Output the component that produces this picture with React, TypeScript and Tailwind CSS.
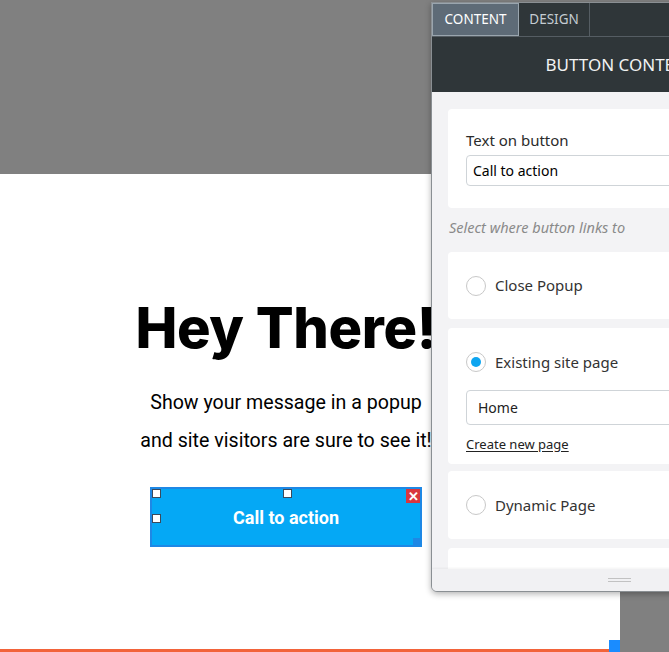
const panelFont = { fontFamily: '"Noto Sans", "Open Sans", sans-serif' };

const Radio = ({ checked }: { checked?: boolean }) => (
  <span className="flex h-[20px] w-[20px] items-center justify-center rounded-full border border-[#c8c8c8] bg-white">
    {checked && <span className="h-[10px] w-[10px] rounded-full bg-[#0ea5f0]" />}
  </span>
);

const Handle = ({ className }: { className: string }) => (
  <span className={`absolute h-[9px] w-[9px] border border-[#3b4a5c] bg-white ${className}`} />
);

export default function App() {
  return (
    <div className="relative h-[652px] w-[669px] overflow-hidden bg-white">
      <div className="h-[174px] bg-[#808080]" />
      <div className="flex h-[478px]">
        <div className="relative w-[620px] bg-white">
          <div className="flex w-[572px] flex-col items-center pt-[124px]">
            <h1
              className="text-[56px] font-extrabold leading-[60px] tracking-[-0.3px] text-black"
              style={{ fontFamily: 'Inter, "Open Sans", sans-serif' }}
            >
              Hey There!
            </h1>
            <div
              className="mt-[26px] text-center text-[19.6px] leading-[38px] text-black"
              style={{ fontFamily: 'Roboto, sans-serif' }}
            >
              <p>Show your message in a popup</p>
              <p>and site visitors are sure to see it!</p>
            </div>
            <div className="relative mt-[27px] flex h-[60px] w-[272px] items-center justify-center border-2 border-[#1e88e5] bg-[#05a8f5]">
              <span className="text-[18px] font-bold text-white" style={{ fontFamily: 'Roboto, sans-serif' }}>
                Call to action
              </span>
              <Handle className="left-0 top-0" />
              <Handle className="left-[131px] top-0" />
              <Handle className="left-0 top-[25px]" />
              <span className="absolute right-0 top-0 flex h-[14px] w-[14px] items-center justify-center bg-[#d9363e] text-[13px] font-bold leading-none text-white">
                ✕
              </span>
              <span className="absolute bottom-0 right-0 h-[7px] w-[7px] bg-[#1e88e5]" />
            </div>
          </div>
          <div className="absolute bottom-0 left-0 h-[3px] w-[610px] bg-[#f2633a]" />
          <div className="absolute bottom-0 right-0 h-[12px] w-[11px] bg-[#1a8cff]" />
        </div>
        <div className="flex-1 bg-[#808080]" />
      </div>

      {/* settings panel */}
      <div
        className="absolute left-[431px] top-[2px] flex h-[590px] w-[380px] flex-col overflow-hidden rounded-bl-[6px] border border-[#8a8f93] bg-[#f3f3f5] shadow-[0_2px_6px_rgba(0,0,0,0.3)]"
        style={panelFont}
      >
        <div className="flex h-[34px] shrink-0 border-b border-[#555d63] bg-[#2f3639]">
          <div className="flex w-[87px] items-center justify-center border border-[#9aa5ae] bg-[#5e6b77] text-[13.5px] text-white">
            CONTENT
          </div>
          <div className="flex w-[71px] items-center justify-center border-r border-[#555d63] text-[13.5px] text-[#c4ccd2]">
            DESIGN
          </div>
        </div>
        <div className="flex h-[55px] shrink-0 items-center justify-center bg-[#2f3639] text-[17px] text-[#f2f2f2]">
          BUTTON CONTENT
        </div>
        <div className="flex flex-1 flex-col overflow-hidden px-[16px] pt-[17px]">
          <div className="flex h-[99px] shrink-0 flex-col rounded-[4px] bg-white px-[18px] pt-[21px]">
            <span className="text-[15px] leading-[20px] text-[#2b2b2b]">Text on button</span>
            <div className="mt-[5px] flex h-[31px] items-center rounded-[4px] border border-[#cfd4d8] px-[6px] text-[14px] text-black">
              Call to action
            </div>
          </div>
          <div className="mt-[9px] shrink-0 pl-[1px] text-[14.5px] leading-[20px] italic text-[#8a8a8a]">
            Select where button links to
          </div>
          <div className="mt-[15px] flex h-[67px] shrink-0 items-center gap-[9px] rounded-[4px] bg-white px-[18px]">
            <Radio />
            <span className="text-[15px] text-[#333]">Close Popup</span>
          </div>
          <div className="mt-[9px] flex h-[136px] shrink-0 flex-col rounded-[4px] bg-white px-[18px] pt-[23px]">
            <div className="flex h-[22px] items-center gap-[9px]">
              <Radio checked />
              <span className="text-[15px] text-[#333]">Existing site page</span>
            </div>
            <div className="mt-[17px] flex h-[35px] items-center rounded-[4px] border border-[#cfd4d8] px-[11px] text-[14px] text-[#222]">
              Home
            </div>
            <span className="mt-[10px] text-[13px] leading-[18px] text-[#222] underline underline-offset-2">
              Create new page
            </span>
          </div>
          <div className="mt-[7px] flex h-[68px] shrink-0 items-center gap-[9px] rounded-[4px] bg-white px-[18px]">
            <Radio />
            <span className="text-[15px] text-[#333]">Dynamic Page</span>
          </div>
          <div className="mt-[9px] h-[40px] shrink-0 rounded-t-[4px] bg-white" />
        </div>
        <div className="flex h-[22px] shrink-0 items-center bg-[#f1f1f3] pl-[176px] shadow-[0_-1px_2px_rgba(0,0,0,0.05)]">
          <div className="flex w-[23px] flex-col gap-[2px]">
            <span className="h-px bg-[#c2c2c2]" />
            <span className="h-px bg-[#c2c2c2]" />
          </div>
        </div>
      </div>
    </div>
  );
}
